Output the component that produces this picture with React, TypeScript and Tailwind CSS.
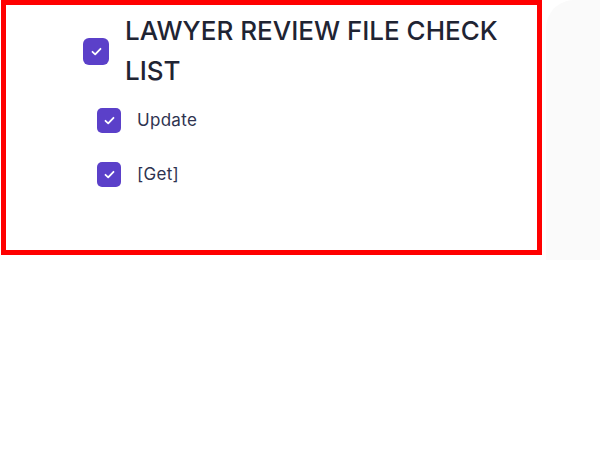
import React from 'react';

const CheckBox = ({ size }: { size: 'lg' | 'sm' }) => (
  <span
    className={`flex shrink-0 items-center justify-center bg-[#5b40c9] ${
      size === 'lg' ? 'h-[27px] w-[26px] rounded-[6px]' : 'h-[25px] w-[24px] rounded-[5px]'
    }`}
  >
    <svg width="11" height="9" viewBox="0 0 11 9" fill="none">
      <path d="M1.5 4.8 L4.2 7.3 L9.5 1.8" stroke="white" strokeWidth="1.8" strokeLinecap="round" strokeLinejoin="round" />
    </svg>
  </span>
);

const items = ['Update', '[Get]'];

export default function App() {
  return (
    <div className="flex h-[469px] w-[600px] bg-white font-['Inter',sans-serif]">
      <div className="ml-[1px] h-[255px] w-[541px] shrink-0 border-[5px] border-[#ff0000] bg-white pl-[77px] pt-[6px]">
        <div className="flex items-center gap-4">
          <CheckBox size="lg" />
          <h1 className="w-[400px] text-[26px] font-medium uppercase leading-[40px] text-[#1f2433]">
            Lawyer Review File Check List
          </h1>
        </div>
        <ul className="mt-[17px] flex flex-col gap-[29px] pl-[14px]">
          {items.map((item) => (
            <li key={item} className="flex h-[25px] items-center gap-4">
              <CheckBox size="sm" />
              <span className="text-[17px] leading-none tracking-[0.3px] text-[#2e3350]">{item}</span>
            </li>
          ))}
        </ul>
      </div>
      <div className="ml-[4px] h-[260px] flex-1 rounded-tl-[28px] bg-[#fafafa]" />
    </div>
  );
}
